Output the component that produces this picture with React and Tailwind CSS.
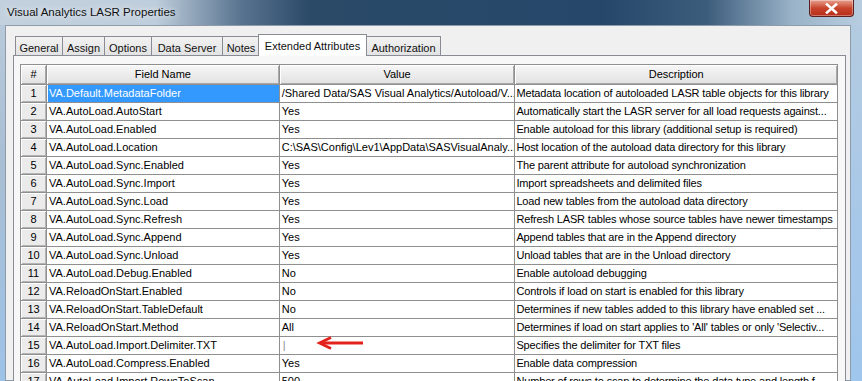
import React from 'react';

const rows = [
  ['VA.Default.MetadataFolder', '/Shared Data/SAS Visual Analytics/Autoload/V...', 'Metadata location of autoloaded LASR table objects for this library'],
  ['VA.AutoLoad.AutoStart', 'Yes', 'Automatically start the LASR server for all load requests against...'],
  ['VA.AutoLoad.Enabled', 'Yes', 'Enable autoload for this library (additional setup is required)'],
  ['VA.AutoLoad.Location', 'C:\\SAS\\Config\\Lev1\\AppData\\SASVisualAnaly...', 'Host location of the autoload data directory for this library'],
  ['VA.AutoLoad.Sync.Enabled', 'Yes', 'The parent attribute for autoload synchronization'],
  ['VA.AutoLoad.Sync.Import', 'Yes', 'Import spreadsheets and delimited files'],
  ['VA.AutoLoad.Sync.Load', 'Yes', 'Load new tables from the autoload data directory'],
  ['VA.AutoLoad.Sync.Refresh', 'Yes', 'Refresh LASR tables whose source tables have newer timestamps'],
  ['VA.AutoLoad.Sync.Append', 'Yes', 'Append tables that are in the Append directory'],
  ['VA.AutoLoad.Sync.Unload', 'Yes', 'Unload tables that are in the Unload directory'],
  ['VA.AutoLoad.Debug.Enabled', 'No', 'Enable autoload debugging'],
  ['VA.ReloadOnStart.Enabled', 'No', 'Controls if load on start is enabled for this library'],
  ['VA.ReloadOnStart.TableDefault', 'No', 'Determines if new tables added to this library have enabled set ...'],
  ['VA.ReloadOnStart.Method', 'All', "Determines if load on start applies to 'All' tables or only 'Selectiv..."],
  ['VA.AutoLoad.Import.Delimiter.TXT', '|', 'Specifies the delimiter for TXT files'],
  ['VA.AutoLoad.Compress.Enabled', 'Yes', 'Enable data compression'],
  ['VA.AutoLoad.Import.RowsToScan', '500', 'Number of rows to scan to determine the data type and length f...'],
];

const tabs = [
  ['General', 'w-[47px]'],
  ['Assign', 'w-[42px]'],
  ['Options', 'w-[47px]'],
  ['Data Server', 'w-[71px]'],
  ['Notes', 'w-[37px]'],
  ['Extended Attributes', 'w-[109px]', true],
  ['Authorization', 'w-[75px]'],
];

const cell = 'h-full border-r border-b border-[#8f8f8f] flex items-center whitespace-nowrap overflow-hidden';
const numCell = 'h-full w-[26px] shrink-0 border-r border-b border-[#8f8f8f] bg-[#ebebeb] shadow-[inset_1px_1px_0_#ffffff,inset_-1px_-1px_0_#b4b4b4] flex items-center justify-center';
const headCell = 'h-full border-r border-b border-[#8f8f8f] bg-gradient-to-b from-[#f7f7f7] to-[#e1e1e1] shadow-[inset_1px_1px_0_#ffffff,inset_-1px_-1px_0_#a8a8a8] flex items-center justify-center';

function App() {
  return (
    <div className="w-[862px] h-[381px] overflow-hidden relative bg-[#a9c8e6] font-['Liberation_Sans',Arial,sans-serif]">
      {/* title bar */}
      <div className="h-[25px] flex items-start bg-[linear-gradient(90deg,#c3d1de_0%,#bfcedc_18%,#58738f_28%,#2b4a68_36%,#26476a_70%,#3d5d7c_82%,#9ab3c8_92%,#b9cde0_100%)]">
        <div className="pl-[7px] pt-[4px] text-[11.5px] text-[#111] [text-shadow:0_0_6px_#fff]">Visual Analytics LASR Properties</div>
        <div className="ml-auto mr-[8px] w-[45px] h-[17px] rounded-b-[4px] border border-[#5a2020] border-t-0 bg-gradient-to-b from-[#e7a08f] via-[#c8442c] to-[#b72d17] flex items-center justify-center shadow-[inset_0_0_0_1px_rgba(255,255,255,0.35)]">
          <svg width="13" height="11" viewBox="0 0 13 11">
            <path d="M2 1.5 L11 9.5 M11 1.5 L2 9.5" stroke="#ffffff" strokeWidth="2.6" strokeLinecap="square" />
          </svg>
        </div>
      </div>

      <div className="flex h-[356px]">
        <div className="w-[5px] bg-[linear-gradient(180deg,#b8c9da_0%,#a8bed3_40%,#9ec3e8_100%)]" />
        <div className="w-[846px] border border-[#8e9bab] bg-[#f0f0f0] pt-[7px] pl-[7px]">
          {/* tabs */}
          <div className="flex items-end h-[22px] pl-[2px]">
            {tabs.map(([label, w, sel]) =>
              sel ? (
                <div key={label} className={`${w} h-[22px] -mx-[1px] relative z-10 -mb-[1px] border border-b-0 border-[#898c95] bg-white text-[11px] text-[#111] flex justify-center pt-[3px] whitespace-nowrap`}>
                  {label}
                </div>
              ) : (
                <div key={label} className={`${w} h-[19px] border border-b-0 border-r-0 last:border-r border-[#898c95] bg-gradient-to-b from-[#f2f2f2] to-[#e3e3e3] text-[11px] text-[#111] flex justify-center pt-[3px] whitespace-nowrap`}>
                  {label}
                </div>
              )
            )}
          </div>

          {/* panel */}
          <div className="w-[833px] h-[330px] border border-[#898c95] bg-[#f7f7f7] pt-[8px] pl-[6px] relative">
            <div className="w-[818px] border-l border-t border-[#8f8f8f] text-[11px] text-black bg-white">
              <div className="flex h-[20px]">
                <div className="w-[26px] shrink-0 h-full border-r border-b border-[#8f8f8f] bg-gradient-to-b from-[#f7f7f7] to-[#e1e1e1] shadow-[inset_1px_1px_0_#ffffff,inset_-1px_-1px_0_#a8a8a8] flex items-center justify-center">#</div>
                <div className={`${headCell} w-[233px]`}>Field Name</div>
                <div className={`${headCell} w-[236px]`}>Value</div>
                <div className={`${headCell} w-[323px]`}>Description</div>
              </div>
              {rows.map(([name, value, desc], i) => (
                <div key={name} className="flex h-[18px]">
                  <div className={numCell}>{i + 1}</div>
                  <div className={`${cell} w-[233px] pl-[1px]`}>
                    <span className={i === 0 ? 'bg-[#3399ff] text-white w-full h-full flex items-center pl-[1px]' : 'pl-[1px]'}>{name}</span>
                  </div>
                  <div className={`${cell} w-[236px] pl-[2px]`}>
                    {value === '|' ? <span className="text-[#8a8a8a] pl-[1px]">|</span> : value}
                  </div>
                  <div className={`${cell} w-[323px] pl-[1px] tracking-[-0.15px]`}>{desc}</div>
                </div>
              ))}
            </div>

            {/* red annotation arrow */}
            <svg className="absolute left-[302px] top-[279px]" width="48" height="16" viewBox="0 0 48 16">
              <path d="M4 8 L47 8" stroke="#e3231b" strokeWidth="2.8" />
              <path d="M15 2.5 L3.5 8 L15 13.5" stroke="#e3231b" strokeWidth="2.8" fill="none" strokeLinejoin="miter" />
            </svg>
          </div>
        </div>
        <div className="flex-1 bg-[linear-gradient(180deg,#b3cbe0_0%,#a9c8e8_50%,#9fc6ec_100%)]" />
      </div>
    </div>
  );
}

export default App;
